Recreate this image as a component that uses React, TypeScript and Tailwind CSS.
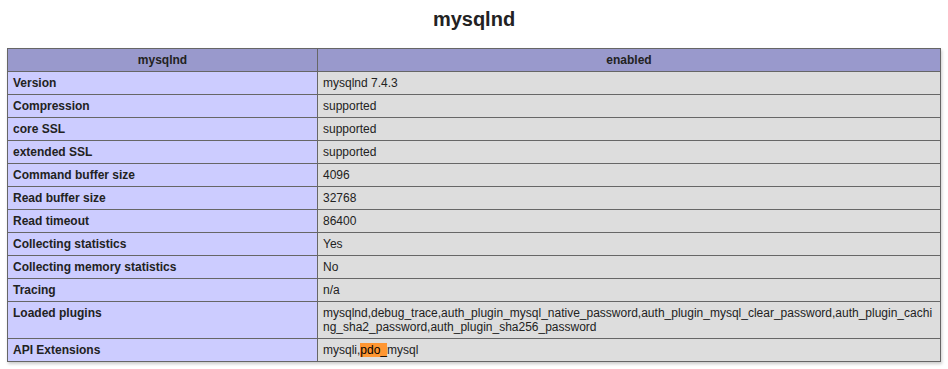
import React from 'react';

const rows: [string, string][] = [
  ['Version', 'mysqlnd 7.4.3'],
  ['Compression', 'supported'],
  ['core SSL', 'supported'],
  ['extended SSL', 'supported'],
  ['Command buffer size', '4096'],
  ['Read buffer size', '32768'],
  ['Read timeout', '86400'],
  ['Collecting statistics', 'Yes'],
  ['Collecting memory statistics', 'No'],
  ['Tracing', 'n/a'],
  [
    'Loaded plugins',
    'mysqlnd,debug_trace,auth_plugin_mysql_native_password,auth_plugin_mysql_clear_password,auth_plugin_caching_sha2_password,auth_plugin_sha256_password',
  ],
];

export default function App() {
  return (
    <div className="min-h-[369px] bg-white text-[#222] font-['Liberation_Sans',Arial,sans-serif]">
      {/* Section title */}
      <h2 className="pt-2 text-center text-[20px] leading-[23px] font-bold">mysqlnd</h2>

      <table className="mx-auto mt-[17px] w-[934px] text-[12px] leading-[14px] shadow-[1px_2px_3px_#ccc]">
        <tbody>
          <tr className="bg-[#99c]">
            <th className="w-[310px] border border-[#666] px-[5px] py-1 font-bold align-baseline">mysqlnd</th>
            <th className="border border-[#666] px-[5px] py-1 font-bold align-baseline">enabled</th>
          </tr>
          {rows.map(([key, value]) => (
            <tr key={key}>
              <td className="w-[310px] border border-[#666] bg-[#ccf] px-[5px] py-1 font-bold align-baseline">{key}</td>
              <td className="max-w-[300px] border border-[#666] bg-[#ddd] px-[5px] py-1 align-baseline break-words">{value}</td>
            </tr>
          ))}
          <tr>
            <td className="w-[310px] border border-[#666] bg-[#ccf] px-[5px] py-1 font-bold align-baseline">API Extensions</td>
            <td className="max-w-[300px] border border-[#666] bg-[#ddd] px-[5px] py-1 align-baseline">
              mysqli,<span className="bg-[#ff9632] text-black">pdo_</span>mysql
            </td>
          </tr>
        </tbody>
      </table>
    </div>
  );
}
